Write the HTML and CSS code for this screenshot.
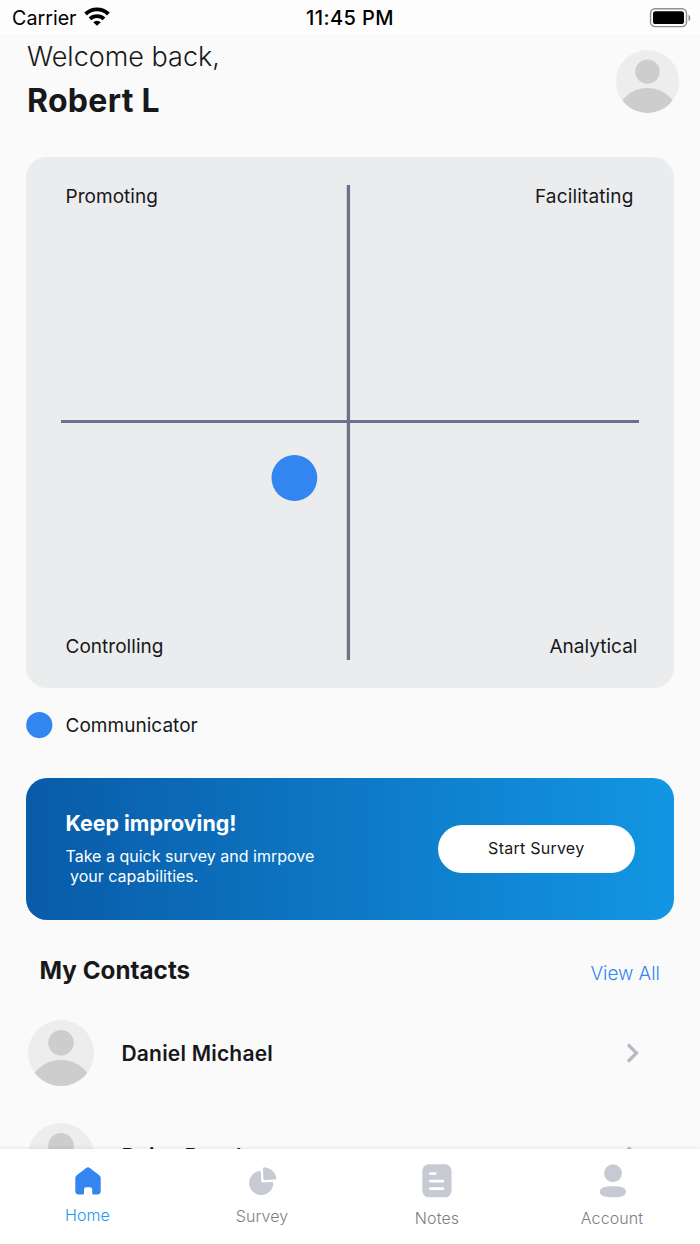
FILE: index.html
```html
<!DOCTYPE html>
<html lang="en">
<head>
<meta charset="utf-8">
<title>Home</title>
<link rel="stylesheet" href="styles.css">
</head>
<body>
<svg class="defs" width="0" height="0" aria-hidden="true">
  <defs>
    <clipPath id="avatar-clip"><circle cx="33" cy="33" r="33"/></clipPath>
    <symbol id="avatar" viewBox="0 0 66 66">
      <circle cx="33" cy="33" r="33" fill="#ededed"/>
      <circle cx="33" cy="22.7" r="12.8" fill="#cdcdcd"/>
      <g clip-path="url(#avatar-clip)"><circle cx="33" cy="73" r="33.3" fill="#cdcdcd"/></g>
    </symbol>
  </defs>
</svg>
<div class="app">
  <div class="status">
    <div class="status-left">
      <span class="carrier">Carrier</span>
      <svg class="wifi" viewBox="0 0 26 19" width="26" height="19">
        <g fill="none" stroke="#000" stroke-width="3.9">
          <path d="M1.6 7A16.4 16.4 0 0 1 24.4 7"/>
          <path d="M6 11.9A10.2 10.2 0 0 1 20 11.9"/>
        </g>
        <path d="M13 18.8L9.2 15.2A5.4 5.4 0 0 1 16.8 15.2Z"/>
      </svg>
    </div>
    <span class="clock">11:45 PM</span>
    <svg class="battery" viewBox="0 0 42 20" width="42" height="20">
      <rect x="1.5" y=".8" width="36" height="17.8" rx="4.5" fill="none" stroke="#8e8e8e" stroke-width="1.4"/>
      <rect x="4" y="3.3" width="31" height="12.8" rx="2.6"/>
      <path d="M39.5 6.7C42 8 42 12 39.5 13.2Z" fill="#8e8e8e"/>
    </svg>
  </div>

  <main class="content">
    <header class="header">
      <div>
        <div class="welcome"><span>Welcome back,</span></div>
        <h1 class="user"><span>Robert L</span></h1>
      </div>
      <svg class="user-avatar"><use href="#avatar"/></svg>
    </header>

    <section class="chart">
      <svg class="plot" viewBox="0 0 648 531">
        <path d="M35 264.5H613" stroke="#6b728a" stroke-width="2.8"/>
        <path d="M322.4 28V503" stroke="#6b728a" stroke-width="3.3"/>
        <circle cx="268.4" cy="321" r="22.9" fill="#3385ef"/>
      </svg>
      <div class="chart-row chart-row-top"><span>Promoting</span><span class="facilitating">Facilitating</span></div>
      <div class="chart-row"><span>Controlling</span><span>Analytical</span></div>
    </section>

    <div class="legend">
      <svg class="legend-dot" viewBox="0 0 27 27"><circle cx="13.3" cy="13.1" r="13.1"/></svg>
      <span class="communicator">Communicator</span>
    </div>

    <section class="banner">
      <div>
        <h2 class="banner-title">Keep improving!</h2>
        <p class="banner-text">Take a quick survey and imrpove<br>&nbsp;your capabilities.</p>
      </div>
      <button class="start">Start Survey</button>
    </section>

    <div class="section-head">
      <h2 class="section-title">My Contacts</h2>
      <a class="view-all">View All</a>
    </div>

    <div class="contact">
      <svg class="contact-avatar"><use href="#avatar"/></svg>
      <span class="contact-name">Daniel Michael</span>
      <svg class="chevron" viewBox="0 0 14 20"><path d="M2 1.5L10.5 10L2 18.5"/></svg>
    </div>
    <div class="contact">
      <svg class="contact-avatar"><use href="#avatar"/></svg>
      <span class="contact-name">Daisy Roach</span>
      <svg class="chevron" viewBox="0 0 14 20"><path d="M2 1.5L10.5 10L2 18.5"/></svg>
    </div>
  </main>

  <nav class="tabs">
    <a class="tab tab-home">
      <svg width="26" height="28" viewBox="0 0 26 28"><path d="M11.2.9Q13-.4 14.8.9L24.3 8.2Q25.7 9.3 25.7 11.2V24Q25.7 27.5 22.2 27.5H18.4Q17.2 27.5 17.2 26.2V22.3Q17.2 20.2 15 20.2H11.2Q9 20.2 9 22.3V26.2Q9 27.5 7.8 27.5H3.8Q.3 27.5.3 24V11.2Q.3 9.3 1.7 8.2Z"/></svg>
      <span>Home</span>
    </a>
    <a class="tab tab-survey">
      <svg width="28" height="28" viewBox="0 0 28 28"><path d="M10 4.1Q11.7 3.7 11.8 5.3L12.2 14.2Q12.3 15.6 13.7 15.5L22.9 15.1Q24.6 15.1 24.3 16.8A12.1 12.1 0 1 1 10 4.1ZM14 1.6Q14 .2 15.4.3A12.8 12.8 0 0 1 27.4 11.2Q27.5 12.6 26 12.6L16 13Q14.5 13.1 14.4 11.6Z"/></svg>
      <span>Survey</span>
    </a>
    <a class="tab tab-notes">
      <svg width="30" height="34" viewBox="0 0 30 34"><rect x=".3" y=".3" width="29.2" height="33" rx="6.5"/><path d="M8.4 9.7H13.2M8.4 17.2H21M8.4 24.7H21" fill="none" stroke="#fff" stroke-width="2.7" stroke-linecap="round"/></svg>
      <span>Notes</span>
    </a>
    <a class="tab tab-account">
      <svg width="28" height="34" viewBox="0 0 28 34"><circle cx="14" cy="9.2" r="8.9"/><path d="M14 22.3C23 22.3 26.9 24 26.9 27.7S23 33.3 14 33.3S.9 31.6.9 27.7S5 22.3 14 22.3Z"/></svg>
      <span>Account</span>
    </a>
  </nav>
</div>
</body>
</html>
```
FILE: styles.css
```css
* { box-sizing: border-box; }
body { margin: 0; background: #fafafa; color: #17181a; font-family: Inter, "Liberation Sans", sans-serif; }
h1, h2, p { margin: 0; }
span, a, h2 { white-space: nowrap; }
.defs { display: block; position: absolute; }
.app { width: 700px; height: 1244px; display: flex; flex-direction: column; overflow: hidden; }

.status { flex: none; height: 34px; padding: 0 9px 0 12px; background: #fdfdfd; color: #000; display: grid; grid-template-columns: 1fr auto 1fr; align-items: center; font-size: 20px; line-height: 36px; }
.status-left { display: flex; align-items: center; gap: 7px; }
.carrier { font-size: 19.7px; }
.wifi { margin-top: -3px; }
.clock { font-weight: 550; font-size: 20px; letter-spacing: .45px; margin-right: 3px; }
.battery { justify-self: end; margin-top: -1px; }

.content { flex: 1; min-height: 0; overflow: hidden; padding: 0 26px; }
.header { display: flex; justify-content: space-between; height: 123px; padding: 0 0 0 1px; }
.welcome { font-size: 27px; font-weight: 300; line-height: 44px; padding-top: 1px; }
.user { font-size: 32px; font-weight: 750; line-height: 44px; letter-spacing: .3px; }
.user-avatar { width: 63px; height: 63px; margin: 16px -5px 0 0; }

.chart { position: relative; height: 531px; width: 647.5px; border-radius: 21px; background: #ebecee; padding: 26px 36px 28px 39.5px; display: flex; flex-direction: column; justify-content: space-between; }
.plot { position: absolute; left: 0; top: 0; width: 648px; height: 531px; }
.chart-row { display: flex; justify-content: space-between; font-size: 19px; line-height: 26px; letter-spacing: .03px; }
.chart-row-top { padding-top: 1px; }
.facilitating { margin-right: 4px; letter-spacing: .15px; }

.legend { display: flex; align-items: center; gap: 12.5px; height: 28px; margin: 23px 0 39px; font-size: 19px; line-height: 26px; }
.legend-dot { width: 27px; height: 27px; fill: #3385ef; }
.communicator { padding-top: 2px; letter-spacing: .03px; }

.banner { display: flex; justify-content: space-between; align-items: flex-start; width: 647.5px; height: 142px; border-radius: 21px; padding: 31px 39px 0 39.5px; color: #fff; background: linear-gradient(90deg, #095ba8, #1296e3); }
.banner-title { font-size: 21.4px; line-height: 28px; font-weight: 700; }
.banner-text { margin-top: 9px; font-size: 16px; line-height: 20px; }
.start { margin-top: 16px; width: 196.5px; height: 48px; padding: 0 0 2px; border: 0; border-radius: 24px; background: #fff; color: #17181a; font: 400 16px/46px Inter, sans-serif; letter-spacing: .25px; }

.section-head { display: flex; justify-content: space-between; margin-top: 34px; padding: 0 14px 0 13.5px; height: 34px; }
.section-title { font-size: 24.2px; line-height: 34px; font-weight: 650; letter-spacing: .03px; }
.view-all { font-size: 18.8px; line-height: 40px; color: #3385ef; font-weight: 350; }

.contact { display: flex; align-items: center; height: 66px; margin: 32px 0 37px; padding: 0 34px 0 1.5px; }
.contact-avatar { width: 66px; height: 66px; margin-right: 28px; }
.contact-name { font-size: 21px; line-height: 26px; padding-top: 2px; font-weight: 600; letter-spacing: .2px; flex: 1; }
.chevron { width: 14px; height: 20px; fill: none; stroke: #b4b9c6; stroke-width: 3.2; }

.tabs { flex: none; position: relative; height: 95px; background: #fff; box-shadow: 0 -1px 4px rgba(0,0,0,.08); display: grid; grid-template-columns: repeat(4, 1fr); }
.tab { display: flex; flex-direction: column; align-items: center; color: #7e7e80; font-size: 16px; line-height: 20px; font-weight: 350; letter-spacing: .1px; padding-right: 1px; }
.tab svg { fill: #c7cad2; }
.tab-home { color: #2196f3; padding-top: 18px; gap: 10px; padding-right: 0; }
.tab-home svg { fill: #3385ef; }
.tab-survey { padding-top: 18px; gap: 11px; }
.tab-survey svg { margin-left: 2px; }
.tab-notes, .tab-account { padding-top: 15px; gap: 10px; }
.tab-account svg { margin-left: 1px; }
```
